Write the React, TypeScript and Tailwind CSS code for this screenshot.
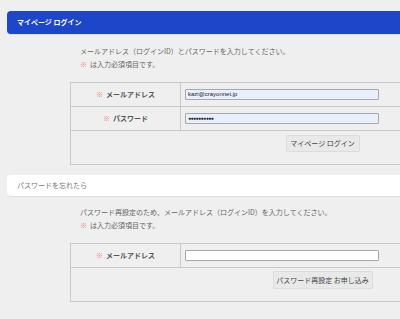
const font = { fontFamily: '"Noto Sans CJK JP", "Noto Sans", sans-serif' };

const Req = () => <span className="text-[#f08080] mr-[3px]">※</span>;

interface IRowProps {
  label: string;
  children: React.ReactNode;
}
const Row: React.FC<IRowProps> = ({ label, children }) => (
  <div className="flex h-[24px] border-b border-[#c9c9c9]">
    <div className="flex w-[110px] items-center justify-center border-r border-[#c9c9c9] text-[7px] font-bold text-[#555]">
      <Req />
      {label}
    </div>
    <div className="flex items-center pl-[4px]">{children}</div>
  </div>
);

const Intro = ({ text, mt }: { text: string; mt: string }) => (
  <div className={`pl-[80px] text-[7px] leading-[12px] text-[#666] ${mt}`}>
    <div>{text}</div>
    <div className="mt-px">
      <Req />
      は入力必須項目です。
    </div>
  </div>
);

export default function App() {
  return (
    <div className="h-[319px] w-[400px] overflow-hidden bg-[#efefef]" style={font}>
      <div className="pl-[7px] pt-[11px]">
        <div className="flex h-[23px] items-center rounded-l-[4px] bg-[#1e46c8] pl-[10px] text-[7px] font-bold text-white shadow-[0_1px_0_#dcdcdc]">
          マイページ ログイン
        </div>
      </div>

      <Intro text="メールアドレス（ログインID）とパスワードを入力してください。" mt="mt-[11px]" />

      <div className="ml-[70px] mt-[12px] w-[504px] border-l border-t border-[#c9c9c9]">
        <Row label="メールアドレス">
          <div className="flex h-[11px] w-[194px] items-center rounded-[1px] border border-[#a8a8a8] bg-[#e8f0fe] pl-[2px] text-[6px] text-[#222]" style={{ fontFamily: '"Liberation Sans", Arial, sans-serif' }}>
            kazi@crayonnet.jp
          </div>
        </Row>
        <Row label="パスワード">
          <div className="flex h-[11px] w-[194px] items-center rounded-[1px] border border-[#a8a8a8] bg-[#e8f0fe] pl-[2px] text-[5px] leading-none tracking-[-0.5px] text-[#222]" style={{ fontFamily: '"Liberation Sans", Arial, sans-serif' }}>
            ●●●●●●●●●●
          </div>
        </Row>
        <div className="flex h-[34px] justify-center border-b border-[#c9c9c9] pt-[4px]">
          <div className="flex h-[17px] w-[74px] items-center justify-center rounded-[2px] border border-[#dcdcdc] bg-[#e9e9e9] text-[7px] text-[#444]">
            マイページ ログイン
          </div>
        </div>
      </div>

      <div className="mt-[10px] pl-[7px]">
        <div className="flex h-[22px] items-center rounded-l-[4px] border-b border-[#dcdcdc] bg-white pl-[10px] text-[7px] text-[#777]">
          パスワードを忘れたら
        </div>
      </div>

      <Intro text="パスワード再設定のため、メールアドレス（ログインID）を入力してください。" mt="mt-[9px]" />

      <div className="ml-[70px] mt-[12px] w-[504px] border-l border-t border-[#c9c9c9]">
        <Row label="メールアドレス">
          <div className="h-[11px] w-[194px] rounded-[1px] border border-[#a8a8a8] bg-white" />
        </Row>
        <div className="flex h-[34px] justify-center border-b border-[#c9c9c9] pt-[3px]">
          <div className="flex h-[18px] w-[100px] items-center justify-center rounded-[2px] border border-[#dcdcdc] bg-[#e9e9e9] text-[7px] text-[#444]">
            パスワード再設定 お申し込み
          </div>
        </div>
      </div>
    </div>
  );
}
